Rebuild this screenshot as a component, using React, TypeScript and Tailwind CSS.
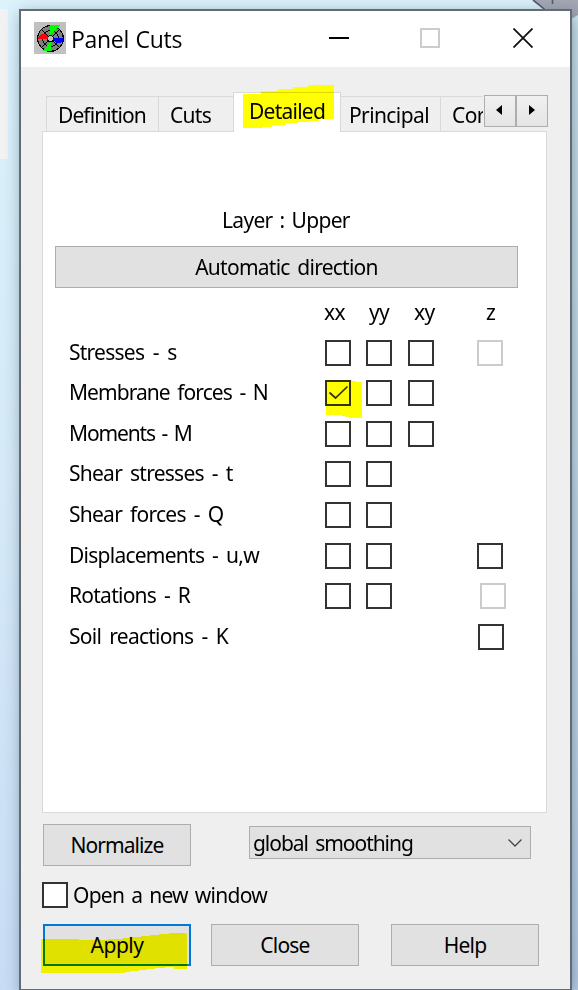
import React from "react";
import clsx from "clsx";

type Box = "on" | "off" | "disabled" | null;

const rows: { name: string; track: string; boxes: Box[]; zShift?: string }[] = [
  { name: "Stresses - s", track: "tracking-[-0.75px] [word-spacing:3.8px]", boxes: ["off", "off", "off", "disabled"] },
  { name: "Membrane forces - N", track: "tracking-[-0.95px] [word-spacing:3.1px]", boxes: ["on", "off", "off", null] },
  { name: "Moments - M", track: "tracking-[-1.15px] [word-spacing:2.4px]", boxes: ["off", "off", "off", null] },
  { name: "Shear stresses - t", track: "tracking-[-0.75px] [word-spacing:3.3px]", boxes: ["off", "off", null, null] },
  { name: "Shear forces - Q", track: "tracking-[-0.75px] [word-spacing:3.3px]", boxes: ["off", "off", null, null] },
  { name: "Displacements - u,w", track: "tracking-[-0.75px] [word-spacing:3.2px]", boxes: ["off", "off", null, "off"] },
  { name: "Rotations - R", track: "tracking-[-0.75px] [word-spacing:3.1px]", boxes: ["off", "off", null, "disabled"], zShift: "ml-[3px]" },
  { name: "Soil reactions - K", track: "tracking-[-0.75px] [word-spacing:3.5px]", boxes: [null, null, null, "off"], zShift: "ml-px" },
];

const CheckBox: React.FC<{ state: Box; className?: string }> = ({ state, className }) => {
  if (!state) return <span />;
  return (
    <span
      className={clsx(
        "relative block size-[26px] shrink-0 border-2 bg-white",
        state === "disabled" ? "border-[#cccccc]" : "border-[#333333]",
        className
      )}
    >
      {state === "on" && (
        <>
          <svg className="absolute -left-0.5 -top-0.5" width="26" height="26" fill="none">
            <path d="M4.5 12.5l6 5.5L22.5 6.5" stroke="#333" strokeWidth="1.7" />
          </svg>
          <svg className="absolute -left-0.5 -top-0.5 mix-blend-multiply" width="38" height="40">
            <path d="M1 0h26v1h4v1h6v36H25v-1h-5v-1h-4v-1H1z" fill="#ff0" />
          </svg>
        </>
      )}
    </span>
  );
};

const Button: React.FC<{ children: React.ReactNode; className?: string }> = ({ children, className }) => (
  <button className={clsx("relative flex h-[42px] items-center justify-center border border-[#adadad] bg-[#e1e1e1]", className)}>
    {children}
  </button>
);

const TitleBar = () => (
  <header className="flex h-14 items-start bg-white pl-[13px] pt-[11px]">
    <svg width="32" height="32" shapeRendering="crispEdges">
      <path d="M0 0h32v32H0z" fill="#c0c0c0" />
      <circle cx="16.5" cy="16.5" r="12.8" fill="#808080" stroke="#000" strokeWidth="1.2" />
      <circle cx="16.5" cy="16.5" r="8" fill="none" stroke="#000" />
      <path d="M7.5 7.5l18 18M25.5 7.5l-18 18" stroke="#000" />
      <circle cx="16.5" cy="16.5" r="3" fill="#c0c0c0" stroke="#000" />
      <path d="M16 3h10l-6 6-4 4z" fill="#0f0" />
      <path d="M17 29H8l5-5 4-5z" fill="#0f0" />
      <path d="M4 17v-2l3-3h4l3 3v2z" fill="#f00" />
      <path d="M19 16h10v2l-3 3h-3l-4-3z" fill="#00f" />
    </svg>
    <h1 className="ml-[5px] w-[258px] font-['Open_Sans'] text-[23px] leading-[34px] tracking-[-0.3px] [word-spacing:1px]">Panel Cuts</h1>
    <span className="mt-[15px] h-0.5 w-5 bg-black" />
    <span className="ml-[71px] mt-1.5 size-5 border-2 border-[#cccccc]" />
    <svg className="ml-[73px] mt-1.5" width="20" height="20" stroke="#111" strokeWidth="1.8">
      <path d="M.5.5l19 19M19.5.5l-19 19" />
    </svg>
  </header>
);

const Tabs = () => (
  <div className="relative z-10 mt-[25px] flex h-10 items-end pl-[25px]">
    <div className="flex h-10 w-[437px] items-end overflow-hidden">
      <span className="h-9 w-28 shrink-0 border-l border-t border-[#d9d9d9] pl-[11px] pt-[3px] tracking-[-0.9px]">Definition</span>
      <span className="h-9 w-[75px] shrink-0 border-l border-t border-[#d9d9d9] pl-[11px] pt-[3px] tracking-[-0.7px]">Cuts</span>
      <span className="h-10 w-[108px] shrink-0 border-x border-t border-[#d9d9d9] bg-white pl-[15px] pt-[3px] tracking-[-0.75px]">Detailed</span>
      <span className="h-9 w-[99px] shrink-0 border-t border-[#d9d9d9] pl-2 pt-[3px] tracking-[-0.6px]">Principal</span>
      <span className="h-9 w-[43px] shrink-0 border-l border-t border-[#d9d9d9] pl-[11px] pt-[3px] tracking-[-0.6px]">Cor</span>
    </div>
    <div className="ml-px flex self-start pt-[3px]">
      <span className="flex h-8 w-8 items-center justify-center border border-[#adadad] bg-linear-to-b from-[#f0f0f0] to-[#e5e5e5] pb-0.5 pr-0.5">
        <svg width="6" height="10"><path d="M6 0v10L0 5z" /></svg>
      </span>
      <span className="flex h-8 w-8 items-center justify-center border border-[#adadad] bg-linear-to-b from-[#f0f0f0] to-[#e5e5e5] pb-0.5">
        <svg width="6" height="10"><path d="M0 0v10l6-5z" /></svg>
      </span>
    </div>
    <svg className="absolute left-[222px] top-[-8px] mix-blend-multiply" width="92" height="44">
      <path d="M0 10h18V7h17V5h15V3h15V1h26v34H76v2H66v1H55v1H42v2H29v2H20v1H0z" fill="#ff0" />
    </svg>
  </div>
);

const Panel = () => (
  <main className="-mt-px ml-[21px] h-[682px] w-[505px] border border-[#d9d9d9] bg-white pl-3">
    <p className="ml-[167px] pt-[73px] leading-[30px] tracking-[-0.7px] [word-spacing:2.3px]">Layer : Upper</p>
    <Button className="mt-[11px] w-[463px] tracking-[-0.75px] [word-spacing:3px]">Automatic direction</Button>
    <div className="ml-[14px] mt-[9px] grid h-[43px] grid-cols-[255px_45px_45px_72px_26px] leading-[30px] tracking-[-0.6px]">
      <span />
      <span>xx</span>
      <span>yy</span>
      <span>xy</span>
      <span>z</span>
    </div>
    <div className="ml-[14px] grid grid-cols-[256px_41px_42px_69px_40px] grid-rows-[40px_41px_40px_41px_41px_40px_41px_26px]">
      {rows.map((row) => (
        <React.Fragment key={row.name}>
          <span className={clsx("h-[26px] leading-[24px] whitespace-nowrap", row.track)}>{row.name}</span>
          {row.boxes.map((state, i) => (
            <CheckBox key={i} state={state} className={i === 3 ? row.zShift : undefined} />
          ))}
        </React.Fragment>
      ))}
    </div>
  </main>
);

const Footer = () => (
  <footer className="pl-[22px]">
    <div className="flex items-start pt-[11px]">
      <Button className="w-[148px] tracking-[-0.95px]">Normalize</Button>
      <div className="ml-[58px] mt-0.5 flex h-[33px] w-[282px] items-center border border-[#adadad] bg-[#e1e1e1] pl-[3px] pr-[7px]">
        <span className="grow tracking-[-1.05px] [word-spacing:3px]">global smoothing</span>
        <svg width="16" height="10" fill="none" stroke="#444" strokeWidth="1.3"><path d="M1.5 1.5L8 8l6.5-6.5" /></svg>
      </div>
    </div>
    <label className="-ml-px mt-4 flex h-[26px] items-center">
      <CheckBox state="off" />
      <span className="ml-[5px] tracking-[-0.75px] [word-spacing:2.3px]">Open a new window</span>
    </label>
    <div className="mt-4 flex">
      <Button className="w-[148px] border-2 !border-[#0078d7] tracking-[-0.5px]">
        Apply
        <svg className="absolute -left-1 top-[7px] mix-blend-multiply" width="148" height="42">
          <path d="M0 6h38v1h29V6h15V5h6V4h12V3h9V2h9V1h10V0h16l1 1h1v35h-13v-2h-9v1h-10v1h-8v1h-8v1h-9v1h-5v1H0z" fill="#ff0" />
        </svg>
      </Button>
      <Button className="ml-5 w-[148px] tracking-[-0.8px]">Close</Button>
      <Button className="ml-8 w-[148px] tracking-[-0.8px]">Help</Button>
    </div>
  </footer>
);

const App: React.FC = () => {
  return (
    <div className="relative h-[990px] w-[578px] overflow-hidden bg-linear-to-b from-[#dcf3fc] via-[#d6eaf8] to-[#c9ddf6] pl-[19px] pt-[9px] font-['Noto_Sans',sans-serif] text-[21px] leading-[30px] text-black">
      <div className="absolute left-0 top-[9px] h-[150px] w-2 bg-[#f3f3f3]" />
      <svg className="absolute right-0 top-0" width="60" height="30">
        <path d="M15 0h45v15L48 22z" fill="#a5a8b5" />
        <path d="M15 0l24 19M34.5 0v4" stroke="#555966" strokeWidth="1.6" />
      </svg>
      <div className="relative h-[982px] w-[553px] border-2 border-[#646b73] bg-[#efefef] shadow-[3px_5px_16px_rgba(40,65,85,0.5)]">
        <TitleBar />
        <Tabs />
        <Panel />
        <Footer />
      </div>
    </div>
  );
};

export default App;
